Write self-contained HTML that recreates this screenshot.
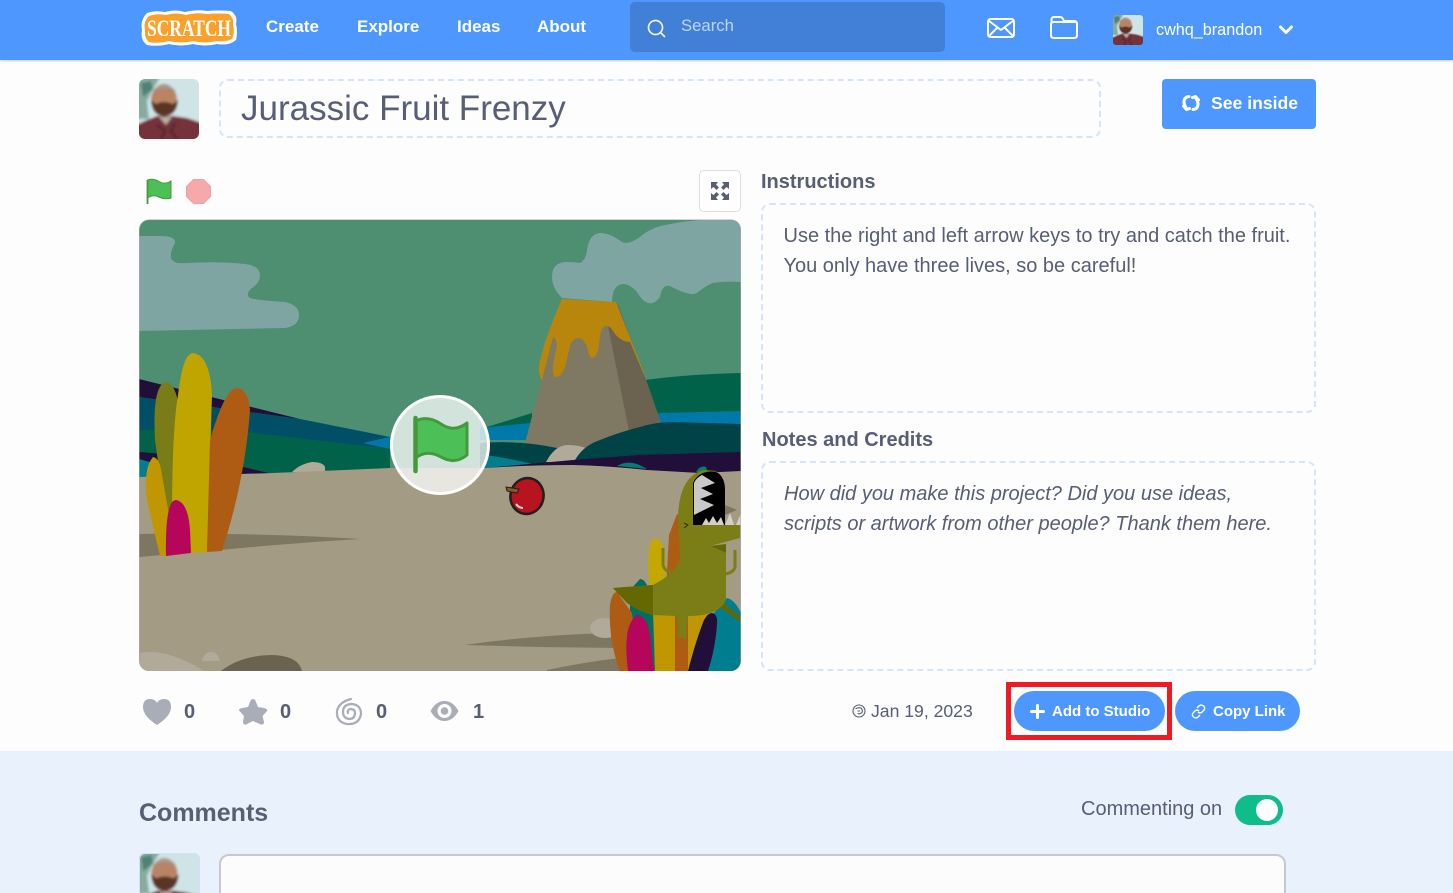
<!DOCTYPE html>
<html lang="en"><head><meta charset="utf-8"><title>Jurassic Fruit Frenzy</title>
<style>
*{box-sizing:border-box}
html,body{margin:0;padding:0;width:1453px;height:893px;overflow:hidden;background:#fdfdfd;font-family:"Liberation Sans",sans-serif;color:#575e75}
#wrap{position:relative;width:1453px;height:893px;overflow:hidden}
.a{position:absolute;white-space:nowrap}
#hdr{left:0;top:0;width:1453px;height:60px;background:#4d97ff;box-shadow:0 1px 2px rgba(0,0,0,.2)}
.nav{top:17px;font-size:17px;font-weight:bold;color:#fff;line-height:20px}
.dash{border:2px dashed #d3e4fb;border-radius:9px}
.txt{font-size:20px;line-height:30px;color:#575e75}
.h{font-size:20px;font-weight:bold;line-height:24px}
.pill{background:#4d97ff;border-radius:20px;height:40px;color:#fff;font-weight:bold;font-size:15px;line-height:40px}
.num{font-size:20px;font-weight:bold;line-height:24px;top:700px}
</style></head><body>
<div id="wrap">
<svg width="0" height="0" style="position:absolute"><defs>
<clipPath id="sc"><rect x="139.500" y="220" width="601" height="451" rx="10"/></clipPath>
<filter id="bl" x="-10%" y="-10%" width="120%" height="120%"><feGaussianBlur stdDeviation="1.300"/></filter>
<clipPath id="av"><rect width="60" height="60" rx="6"/></clipPath>
<symbol id="face" viewBox="0 0 60 60"><g clip-path="url(#av)"><g filter="url(#bl)">
<rect x="-3" y="-3" width="66" height="66" fill="#cfe4e6"/><path d="M-3-3H22L14 10 8 22 10 40H-3z" fill="#86aca0"/><path d="M2 4 12 2 14 10 4 18z" fill="#4f8274"/>
<path d="M-3 46 8 41 18 37H34L48 39 63 44V63H-3z" fill="#74313a"/>
<path d="M20 38 27 46 33 38z" fill="#b9ada2"/>
<path d="M18 46 26 52 22 60M36 44 32 52 38 60" stroke="#54222b" stroke-width="2" fill="none"/>
<ellipse cx="25" cy="21" rx="13" ry="16" fill="#b88465"/><path d="M12 21Q13 37 25 37 38 37 39 21L34 25Q25 21 17 25z" fill="#5a3626"/><path d="M13 12Q25 0 37 12L34 11Q25 7 16 11z" fill="#a49c90"/>
</g></g></symbol>
</defs></svg>

<div class="a" id="hdr"></div>
<svg class="a" style="left:139px;top:8px" width="100" height="40" viewBox="0 0 100 40">
<path d="M8 5Q16 2 26 4 36 1 46 4 58 1 68 3 80 2 92 3 99 8 97 16 99 24 97 32 90 38 78 36 66 39 54 36 42 39 30 36 18 39 8 37 1 32 3 22 1 12 8 5z" fill="#fff"/>
<path d="M10 8Q18 5 27 7 37 4 47 7 58 4 68 6 79 5 90 6 95 10 94 17 96 24 93 31 87 34 77 33 66 36 54 33 42 36 30 33 18 36 10 34 5 30 6 21 4 14 10 8z" fill="#faa12b"/>
<text x="50" y="28" text-anchor="middle" font-family="Liberation Serif,serif" font-weight="bold" font-size="23" fill="#fff" textLength="84" lengthAdjust="spacingAndGlyphs">SCRATCH</text></svg>
<div class="a nav" style="left:266px">Create</div>
<div class="a nav" style="left:357px">Explore</div>
<div class="a nav" style="left:457px">Ideas</div>
<div class="a nav" style="left:537px">About</div>
<div class="a" style="left:630px;top:2px;width:315px;height:50px;background:#4280d7;border-radius:5px"></div>
<svg class="a" style="left:646px;top:18px" width="22" height="22" viewBox="0 0 22 22" fill="none" stroke="#fff" stroke-width="1.700" stroke-linecap="round" opacity=".9"><circle cx="9.500" cy="9.500" r="7"/><path d="M14.500 14.500 18.500 18.500"/></svg>
<div class="a" style="left:681px;top:16px;font-size:16.700px;line-height:20px;color:#fff;opacity:.65">Search</div>
<svg class="a" style="left:986px;top:17px" width="30" height="22" viewBox="0 0 30 22" fill="none" stroke="#fff" stroke-width="2" stroke-linejoin="round"><rect x="2" y="2" width="26" height="18" rx="2.500"/><path d="M2.500 3.500 15 13 27.500 3.500M3 19l8.500-8.500M27 19l-8.500-8.500"/></svg>
<svg class="a" style="left:1049px;top:15px" width="30" height="25" viewBox="0 0 30 25" fill="none" stroke="#fff" stroke-width="2" stroke-linejoin="round"><path d="M2.500 8V5Q2.500 2 5 2H11Q13 2 14 4L15 6H25Q28 6 28 9V20Q28 23 25 23H5Q2 23 2 20V9Q2 7 5 7H28"/></svg>
<svg class="a" style="left:1113px;top:15px" width="30" height="30"><use href="#face" width="30" height="30"/></svg>
<div class="a" style="left:1156px;top:20px;font-size:16.200px;line-height:20px;color:#fff">cwhq_brandon</div>
<svg class="a" style="left:1278px;top:24px" width="16" height="12" viewBox="0 0 16 12" fill="none" stroke="#fff" stroke-width="3" stroke-linecap="round" stroke-linejoin="round"><path d="M2.500 3 8 8.500 13.500 3"/></svg>

<svg class="a" style="left:139px;top:79px" width="60" height="60"><use href="#face" width="60" height="60"/></svg>
<div class="a dash" style="left:219px;top:79px;width:882px;height:59px"></div>
<div class="a" style="left:241px;top:89px;font-size:35px;line-height:40px">Jurassic Fruit Frenzy</div>
<div class="a" style="left:1162px;top:79px;width:154px;height:50px;background:#4d97ff;border-radius:4px"></div>
<svg class="a" style="left:1181px;top:94px" width="20" height="18" viewBox="0 0 20 18" fill="none" stroke="#fff" stroke-width="3" stroke-linecap="round" stroke-linejoin="round"><path d="M8 2.500Q3 3 3 8 3 11 5 13.500M2.500 12 5.500 15.500 8.500 14.500M12 15.500Q17 15 17 10 17 7 15 4.500M17.500 6 14.500 2.500 11.500 3.500"/></svg>
<div class="a" style="left:1211px;top:92px;font-size:17.600px;font-weight:bold;color:#fff;line-height:22px">See inside</div>

<svg class="a" style="left:145px;top:178px" width="28" height="28" viewBox="0 0 28 28"><path d="M2.500 2Q8 0 14 3.500T26 3V20Q20 22 14 19T2.500 20z" fill="#4cbf56" stroke="#45993d" stroke-width="1"/><path d="M2.500 2V26" stroke="#45993d" stroke-width="1.800"/></svg>
<svg class="a" style="left:186px;top:179px" width="25" height="25" viewBox="0 0 25 25"><path d="M7.500.5H17.500L24.500 7.500V17.500L17.500 24.500H7.500L.5 17.500V7.500z" fill="#f7a8ab" stroke="#eca3a5"/></svg>
<div class="a" style="left:699px;top:170px;width:42px;height:42px;border:1px solid #ddd;border-radius:5px;background:#fff"></div>
<svg class="a" style="left:710px;top:181px" width="20" height="20" viewBox="0 0 20 20" fill="#575e75"><path d="M1 1H8L6 3.500 9 6.500 6.500 9 3.500 6 1 8zM19 1H12L14 3.500 11 6.500 13.500 9 16.500 6 19 8zM1 19H8L6 16.500 9 13.500 6.500 11 3.500 14 1 12zM19 19H12L14 16.500 11 13.500 13.500 11 16.500 14 19 12z"/></svg>

<svg class="a" style="left:0;top:0" width="1453" height="893" viewBox="0 0 1453 893">
<rect x="139" y="219.500" width="602" height="451.500" rx="10" fill="#a9a9a9"/>
<g clip-path="url(#sc)">
<rect x="139" y="220" width="602" height="451" fill="#4d8f70"/>
<path d="M139 236H160Q176 236 175 243 170 252 171 258 173 264 185 263 220 261 245 264 260 266 260 275 260 283 252 288 245 294 250 298 255 300 285 302 299 305 299 315 299 326 285 328L139 331z" fill="#7ea5a2"/>
<path d="M562 298Q552 288 552 277 552 263 565 262 575 262 580 263 586 260 587 250 589 234 600 233 610 233 622 242 628 245 640 237 650 228 665 225 685 221 700 220H741V282Q725 281 713 283 705 286 697 293 690 297 670 286 662 284 660 297 654 305 648 303 642 301 637 292 630 284 623 284 612 285 612 302z" fill="#7ea5a2"/>
<path d="M139 379 300 419 139 397z" fill="#210e39"/>
<path d="M139 397 300 419 390 437V470H139z" fill="#004f66"/>
<path d="M363 443 390 437V449z" fill="#0079a8"/>
<path d="M139 430Q200 428 247 432L390 449V480H139z" fill="#006349"/>
<path d="M139 452 200 457 273 474H139z" fill="#210e39"/>
<path d="M139 459 150 462V480H139z" fill="#007e8f"/>
<path d="M487 427 532 413V440H487zM645 380Q690 374 741 373V420H645z" fill="#006349"/>
<path d="M480 428 530 423 661 413 741 411V440H480z" fill="#0079a8"/>
<path d="M525 443 553 337 580 305H618L645 377 661 423 629 431 600 470H500z" fill="#7f7862"/>
<path d="M608 326 618 305 645 377 661 423 629 431z" fill="#6b6350"/>
<path d="M562 299 616 302 644 373 645 377 630 342Q622 342 615 334 610 325 605 326 600 328 599 345 597 358 592 358 589 358 587 346 583 338 578 338 572 339 570 346L565 367Q561 377 556 377 552 376 553 365L557 345Q556 338 553 337L542 380Q538 376 539 365 544 340 562 299z" fill="#b9860d"/>
<path d="M480 443Q520 440 557 448L590 470H480z" fill="#004346"/>
<path d="M485 455Q510 458 540 466L485 470z" fill="#007e8f"/>
<path d="M546 462Q555 445 568 445 578 445 586 448L578 465z" fill="#b1a99a"/>
<path d="M574 462Q582 446 600 440 620 432 640 427 655 422 673 422 705 423 741 424V460H574z" fill="#004346"/>
<path d="M485 468 573 460 640 455 741 452V474H485z" fill="#210e39"/>
<path d="M292 472Q300 464 312 462 323 462 325 467V472z" fill="#b1a99a"/>
<path d="M617 466Q630 458 647 469zM696 472Q700 465 706 467L708 473z" fill="#007e6f"/>
<path d="M139 477 273 473 390 468 485 468Q530 465 573 465 610 466 647 470L700 473 741 471V671H139z" fill="#a49b85"/>
<path d="M139 534Q190 533 230 534 300 535 360 539 280 544 220 550L139 557z" fill="#7d7660"/>
<path d="M465 645Q520 637 583 634L620 633V648L540 647z" fill="#7d7660"/>
<path d="M547 670Q585 662 620 658V671H547z" fill="#7d7660"/>
<path d="M166 382Q178 384 180 420L173 510 166 520 155 440Q152 385 166 382z" fill="#7a7c18"/>
<path d="M193 353Q210 355 212 395L207 552 178 554 172 520Q172 430 178 395 183 353 193 353z" fill="#c0a500"/>
<path d="M237 388Q248 389 250 410 245 480 222 551L207 552 210 440Q225 388 237 388z" fill="#ae5c14"/>
<path d="M153 457Q160 458 162 475L170 520 166 556H160L148 505Q142 470 153 457z" fill="#c09700"/>
<path d="M176 500Q188 502 190 530L191 553 166 556Q165 500 176 500z" fill="#b5065c"/>
<ellipse cx="605" cy="628" rx="15" ry="10" fill="#b1a99a"/>
<path d="M140 653Q155 650 173 656 190 662 204 671H139z" fill="#b1a99a"/>
<path d="M202 661Q204 652 211 652 218 652 220 661z" fill="#b1a99a"/>
<path d="M221 671Q240 656 270 655 298 655 302 671z" fill="#6b6350"/>
<path d="M655 538Q663 540 665 555V590L650 590Q645 540 655 538z" fill="#c4a800"/>
<path d="M677 514 669 535 666 590H690V525z" fill="#ae5c14"/>
<path d="M640 579Q645 579 648 588L668 671H630V590z" fill="#006f60"/>
<path d="M727 598Q735 600 741 613V671H708L712 615z" fill="#007e8f"/>
<path d="M617 592 632 613 640 671H620Q608 640 610 605 612 592 617 592z" fill="#ae5c14"/>
<path d="M653 612H675V671H655z" fill="#c09700"/>
<path d="M675 612H688V671H675z" fill="#ae5c14"/>
<path d="M688 612H708V640L695 671H688z" fill="#c09700"/>
<path d="M637 615Q647 616 650 635L654 671H628Q622 625 637 615z" fill="#b5065c"/>
<path d="M712 613Q718 614 717 625 715 650 708 671H688Q696 640 704 620 708 613 712 613z" fill="#210e39"/>
<path d="M720 600 741 617V622L718 606z" fill="#656800"/>
<path d="M725 505 737 510 725 515z" fill="#7d7660"/>
<path d="M663 548V565Q665 572 673 573M735 550V567Q734 572 726 574" fill="none" stroke="#7b7d16" stroke-width="3"/>
<path d="M703 470Q690 474 684 487 679 497 678 515L680 557Q678 572 653 585L613 588 627 603Q640 612 653 615L677 616 678 638 686 639 688 616Q708 616 717 610 726 604 726 597V553L710 546 740 538V525H693V483Q698 475 718 471z" fill="#7b7d16"/>
<path d="M613 588 653 585V615Q640 612 627 603z" fill="#656800"/>
<path d="M710 546 726 544V553z" fill="#656800"/>
<path d="M703 473Q712 470 718 473 725 478 725 490V525H693V483Q696 476 703 473z" fill="#000"/>
<path d="M702 475 715 483 701 488 713 494 700 499 714 505 694 515V483Q696 478 702 475z" fill="#c9c9c9"/>
<path d="M702 525 706 518 709 523 713 516 717 523 721 517 724 525zM725 525 730 513 734 525zM736 525 741 513V525z" fill="#d4d0c4"/>
<path d="M684 523 688 525 684 528" fill="none" stroke="#33330c" stroke-width="1"/>
<ellipse cx="527" cy="496" rx="16.500" ry="18" transform="rotate(12 527 496)" fill="#b7141f" stroke="#231f20" stroke-width="2.600"/>
<path d="M506 487 519 489 517 493 507 491z" fill="#8a5a1e" stroke="#231f20" stroke-width="1"/>
<path d="M516 504Q519 508 523 508" fill="none" stroke="#f0d0d0" stroke-width="2"/>
</g>
<circle cx="440" cy="445" r="48.500" fill="#fff" fill-opacity=".75" stroke="#fff" stroke-width="3"/>
<path d="M415.500 421Q428 415 441 424T467 423V455Q455 465 441 457T415.500 458z" fill="#4cbf56" stroke="#45993d" stroke-width="3" stroke-linejoin="round"/>
<path d="M415.500 418V471" stroke="#45993d" stroke-width="4.500" stroke-linecap="round"/>
</svg>

<div class="a h" style="left:761px;top:170px">Instructions</div>
<div class="a dash" style="left:761px;top:203px;width:555px;height:210px"></div>
<div class="a txt" style="left:783.500px;top:221px">Use the right and left arrow keys to try and catch the fruit.<br>You only have three lives, so be careful!</div>
<div class="a h" style="left:762px;top:428px">Notes and Credits</div>
<div class="a dash" style="left:761px;top:461px;width:555px;height:210px"></div>
<div class="a txt" style="left:784px;top:479px;font-style:italic">How did you make this project? Did you use ideas,<br>scripts or artwork from other people? Thank them here.</div>

<svg class="a" style="left:141px;top:697px" width="32" height="30" viewBox="0 0 32 30"><path d="M16 28Q2 19 2 10 2 2 9 2 14 2 16 6 18 2 23 2 30 2 30 10 30 19 16 28z" fill="#a9adb8"/></svg>
<div class="a num" style="left:184px">0</div>
<svg class="a" style="left:237px;top:697px" width="32" height="30" viewBox="0 0 32 30"><path d="M16 2Q18 2 19 5L21 10 27 11Q31 12 30 14L25.500 19 27 25Q27 28 24 27.500L16 24 9 27.500Q6 28 6 25L7 19 2.500 14Q1 12 5 11L11 10 13 5Q14 2 16 2z" fill="#a9adb8"/></svg>
<div class="a num" style="left:280px">0</div>
<svg class="a" style="left:334px;top:697px" width="30" height="30" viewBox="0 0 30 30" fill="none" stroke="#a9adb8" stroke-width="2.200" stroke-linecap="round"><path d="M17 2Q5 5 3 14 2 25 13 27 25 28 27 17 27 8 18 7 9 7 9 15 9 21 15 22 21 22 21 16 21 12 16 12 13 13 14 16"/></svg>
<div class="a num" style="left:376px">0</div>
<svg class="a" style="left:430px;top:700px" width="29" height="22" viewBox="0 0 29 22"><path d="M.5 11Q6 1 14.500 1T28.500 11Q23 21 14.500 21T.5 11z" fill="#a9adb8"/><circle cx="14.500" cy="11" r="7" fill="#fdfdfd"/><circle cx="14.500" cy="11" r="3.800" fill="#a9adb8"/></svg>
<div class="a num" style="left:473px">1</div>

<svg class="a" style="left:852px;top:704px" width="14" height="14" viewBox="0 0 14 14" fill="none" stroke="#575e75" stroke-width="1.100"><circle cx="7" cy="7" r="6"/><path d="M3.500 5Q6 3 9 4 11 6 10 8.500 8 10.500 5.500 9.500M5.500 7H8"/></svg>
<div class="a" style="left:871px;top:700px;font-size:17.600px;line-height:22px">Jan 19, 2023</div>
<div class="a" style="left:1006px;top:682px;width:166px;height:58px;border:5px solid #ed1c24"></div>
<div class="a pill" style="left:1014px;top:691px;width:151px"></div>
<svg class="a" style="left:1030px;top:704px" width="15" height="15" viewBox="0 0 15 15"><path d="M7.500 1.500V13.500M1.500 7.500H13.500" stroke="#fff" stroke-width="3" stroke-linecap="round"/></svg>
<div class="a" style="left:1052px;top:692px;font-size:15px;line-height:40px;font-weight:bold;color:#fff">Add to Studio</div>
<div class="a pill" style="left:1175px;top:691px;width:125px"></div>
<svg class="a" style="left:1191px;top:704px" width="15" height="15" viewBox="0 0 15 15" fill="none" stroke="#fff" stroke-width="1.400"><path d="M6 4 8.500 1.500Q10.500 0.500 12.500 2 14.500 4 13 6L10.500 8.500Q8.500 9.500 7 8M9 11 6.500 13.500Q4.500 14.500 2.500 13 .5 11 2 9L4.500 6.500Q6.500 5.500 8 7"/></svg>
<div class="a" style="left:1213px;top:692px;font-size:15px;line-height:40px;font-weight:bold;color:#fff">Copy Link</div>

<div class="a" style="left:0;top:751px;width:1453px;height:142px;background:#e9f1fc"></div>
<div class="a" style="left:139px;top:798px;font-size:25px;font-weight:bold;line-height:30px">Comments</div>
<div class="a" style="left:1081px;top:797px;font-size:20px;line-height:24px">Commenting on</div>
<div class="a" style="left:1235px;top:795px;width:48px;height:30px;border-radius:15px;background:#0fbd8c"></div>
<div class="a" style="left:1256px;top:799px;width:22px;height:22px;border-radius:50%;background:#fff"></div>
<svg class="a" style="left:139px;top:853px" width="61" height="61"><use href="#face" width="61" height="61"/><rect x=".5" y=".5" width="60" height="60" rx="6" fill="none" stroke="#cfe0fa"/></svg>
<div class="a" style="left:219px;top:854px;width:1067px;height:80px;border:2px solid #c8c8c8;border-radius:10px;background:#fcfcfc"></div>
</div>
</body></html>
